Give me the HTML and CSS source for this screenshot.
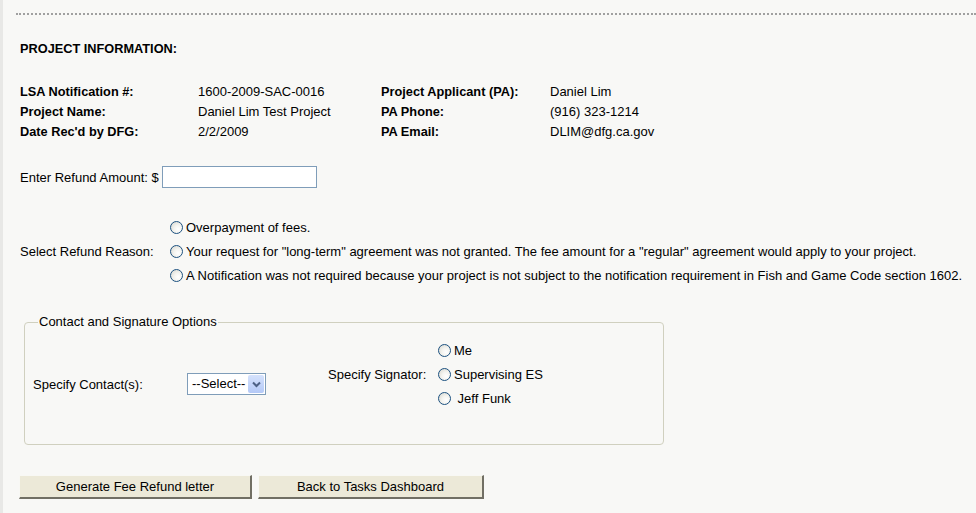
FILE: index.html
```html
<!DOCTYPE html>
<html>
<head>
<meta charset="utf-8">
<title>Fee Refund</title>
<link rel="stylesheet" href="styles.css">
</head>
<body>
<div class="frame">
  <div class="page">
    <div class="rule"></div>
    <h2 class="section-title">PROJECT INFORMATION:</h2>
    <div class="info">
      <div class="lbl">LSA Notification #:</div><div class="val">1600-2009-SAC-0016</div>
      <div class="lbl">Project Applicant (PA):</div><div class="val">Daniel Lim</div>
      <div class="lbl">Project Name:</div><div class="val">Daniel Lim Test Project</div>
      <div class="lbl">PA Phone:</div><div class="val">(916) 323-1214</div>
      <div class="lbl">Date Rec'd by DFG:</div><div class="val">2/2/2009</div>
      <div class="lbl">PA Email:</div><div class="val">DLIM@dfg.ca.gov</div>
    </div>
    <div class="amount">
      <span>Enter Refund Amount: $</span>
      <input class="textbox" type="text">
    </div>
    <div class="reason">
      <div class="reason-label">Select Refund Reason:</div>
      <div class="reason-options">
        <div class="opt"><span class="radio"></span>Overpayment of fees.</div>
        <div class="opt"><span class="radio"></span>Your request for "long-term" agreement was not granted. The fee amount for a "regular" agreement would apply to your project.</div>
        <div class="opt"><span class="radio"></span>A Notification was not required because your project is not subject to the notification requirement in Fish and Game Code section 1602.</div>
      </div>
    </div>
    <fieldset class="options">
      <legend>Contact and Signature Options</legend>
      <div class="options-body">
        <div class="contact">
          <span class="contact-label">Specify Contact(s):</span>
          <div class="select"><span class="select-text">--Select--</span><span class="select-btn"><svg width="9" height="7" viewBox="0 0 9 7"><path d="M1 1.5 L4.5 5 L8 1.5" fill="none" stroke="#4d6185" stroke-width="2"/></svg></span></div>
        </div>
        <div class="signator">
          <span class="signator-label">Specify Signator:</span>
          <div class="signator-options">
            <div class="opt"><span class="radio"></span>Me</div>
            <div class="opt"><span class="radio"></span>Supervising ES</div>
            <div class="opt"><span class="radio"></span>&nbsp;Jeff Funk</div>
          </div>
        </div>
      </div>
    </fieldset>
    <div class="actions">
      <button class="btn btn-gen">Generate Fee Refund letter</button>
      <button class="btn btn-back">Back to Tasks Dashboard</button>
    </div>
  </div>
</div>
</body>
</html>
```

FILE: styles.css
```css
html, body {
  margin: 0;
  padding: 0;
  background: #f8f8f6;
}
body {
  font-family: "Liberation Sans", Arial, sans-serif;
  font-size: 13px;
  font-weight: normal;
  color: #000;
}
.frame {
  border-left: 3px solid #e8e8e6;
  min-height: 513px;
  box-sizing: border-box;
}
.page {
  padding-top: 13px;
}
.rule {
  margin-left: 13px;
  border-top: 2px dotted #a0a0a0;
}
.section-title {
  margin: 26px 0 0 17px;
  font-size: 12.75px;
  font-weight: bold;
  line-height: 16px;
}
.info {
  margin: 25px 0 0 17px;
  display: grid;
  grid-template-columns: 178px 183px 169px 200px;
  line-height: 20px;
}
.lbl {
  font-weight: bold;
  font-size: 12.75px;
}
.amount {
  margin: 24px 0 0 17px;
  display: flex;
  align-items: center;
  gap: 3px;
  height: 22px;
}
.textbox {
  width: 155px;
  height: 22px;
  box-sizing: border-box;
  border: 1px solid #7f9db9;
  background: #fff;
  margin: 0;
  padding: 0 2px;
}
.reason {
  margin: 27px 0 0 17px;
  display: flex;
  align-items: center;
}
.reason-label {
  width: 150px;
}
.reason-options,
.signator-options {
  display: flex;
  flex-direction: column;
}
.opt {
  display: flex;
  align-items: center;
  height: 24px;
  white-space: nowrap;
  font-weight: normal;
}
.radio {
  width: 13px;
  height: 13px;
  box-sizing: border-box;
  border: 1px solid #1c5180;
  border-radius: 50%;
  background: radial-gradient(circle at 65% 65%, #ffffff 0%, #f4f4f0 40%, #d4d4cc 100%);
  margin-right: 3px;
  flex: none;
}
.options {
  margin: 27px 0 0 21px;
  width: 640px;
  box-sizing: border-box;
  border: 1px solid #d0d0bf;
  border-radius: 4px;
  padding: 0 8px;
  height: 131px;
}
.options legend {
  padding: 0 1px;
  margin-left: 5px;
  line-height: 16px;
}
.options-body {
  display: flex;
  align-items: flex-start;
  padding-top: 8px;
}
.contact {
  display: flex;
  align-items: center;
  margin-top: 35px;
  width: 295px;
}
.contact-label {
  width: 154px;
}
.select {
  width: 79px;
  height: 22px;
  box-sizing: border-box;
  border: 1px solid #7f9db9;
  background: #fff;
  display: flex;
  align-items: center;
  justify-content: space-between;
  padding: 1px 1px 1px 4px;
}
.select-text {
  line-height: 18px;
}
.select-btn {
  width: 16px;
  height: 18px;
  background: linear-gradient(#d5e2fc, #b4c9f7);
  border-radius: 2px;
  display: flex;
  align-items: center;
  justify-content: center;
}
.signator {
  display: flex;
  align-items: center;
}
.signator-label {
  width: 110px;
}
.actions {
  margin: 30px 0 0 16px;
  display: flex;
  gap: 6px;
}
.btn {
  font-family: "Liberation Sans", Arial, sans-serif;
  font-size: 13px;
  height: 24px;
  background: #ece9d8;
  border-style: solid;
  border-color: #f8f8f4 #716f64 #716f64 #f8f8f4;
  border-width: 1px 2px 2px 1px;
  padding: 0;
  color: #000;
}
.btn-gen {
  width: 233px;
}
.btn-back {
  width: 226px;
}
```
